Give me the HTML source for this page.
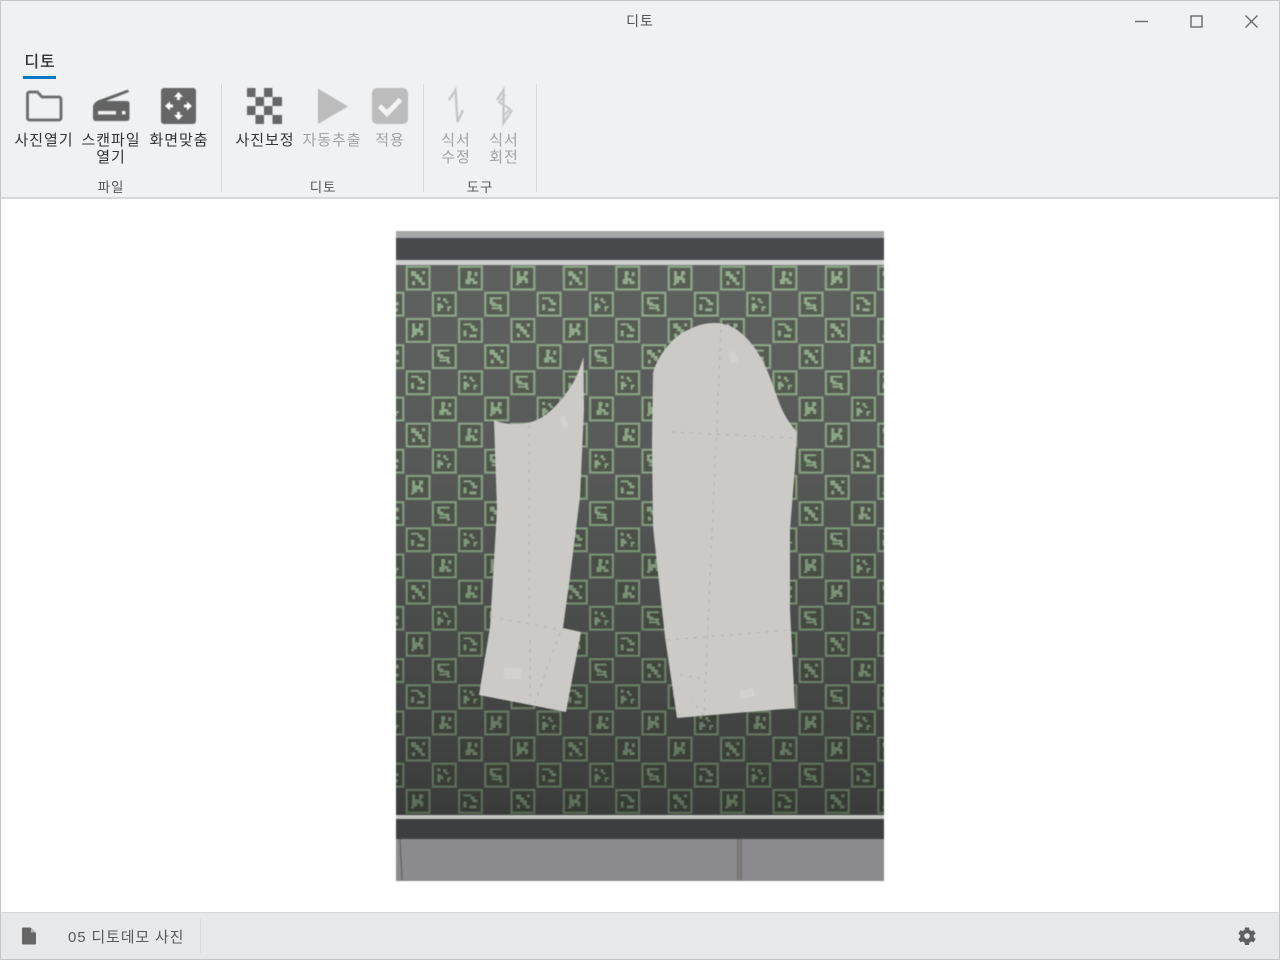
<!DOCTYPE html>
<html lang="ko"><head><meta charset="utf-8"><title>디토</title>
<style>
html,body{margin:0;padding:0;width:1280px;height:960px;overflow:hidden;background:#fff}
body{position:relative;font-family:"Liberation Sans","Noto Sans CJK KR",sans-serif;color:#333}
.t{position:absolute;white-space:nowrap;text-align:center;font-size:15px;line-height:17px;letter-spacing:.95px;filter:blur(.3px)}
.d{color:#a2a2a2}
.g{font-size:13.5px;color:#555;letter-spacing:.8px}
#ribbon{position:absolute;left:0;top:0;width:1280px;height:197px;background:#eff1f3;border-bottom:2px solid #d6d8da;box-sizing:content-box}
#frame{position:absolute;left:0;top:0;width:1278px;height:958px;border:1px solid #c4c7ca;pointer-events:none}
#status{position:absolute;left:0;top:912px;width:1280px;height:48px;background:#e7e8ea;border-top:1px solid #d6d7d9;box-sizing:border-box}
.sep{position:absolute;width:1px;background:#d8dadc}
svg{position:absolute;overflow:visible}
</style></head><body>
<div id="ribbon"></div>
<div class="t" style="left:600px;top:13px;width:80px;color:#555;font-size:14px">디토</div>
<svg style="left:1130px;top:10px" width="140" height="22" fill="none" stroke="#6a6a6a" stroke-width="1.400">
<path d="M5 11.500H18"/><rect x="61" y="6" width="11" height="11"/><path d="M115.500 5.500L127.500 17.500M127.500 5.500L115.500 17.500"/></svg>
<div class="t" style="left:20px;top:54px;width:40px;font-size:16px;color:#333;font-weight:500">디토</div>
<div style="position:absolute;left:23px;top:76px;width:33px;height:3px;background:#0b78c6"></div>

<svg style="left:0;top:80px;filter:blur(.4px)" width="560" height="50">
<path d="M27.500 14a2 2 0 0 1 2-2h8l4.500 5h17a2 2 0 0 1 2 2v19a2 2 0 0 1-2 2h-29.500a2 2 0 0 1-2-2z" fill="none" stroke="#6a6a6a" stroke-width="2.800"/>
<path d="M93 27c0-3 3-5.500 5-6.500l30-11 1 2.500-23 9h21a2.500 2.500 0 0 1 2.500 2.500v15a2.500 2.500 0 0 1-2.500 2.500h-31.500a2.500 2.500 0 0 1-2.500-2.500z" fill="#646464"/>
<rect x="98" y="31" width="18" height="3.500" fill="#eff1f3"/><rect x="122" y="31" width="3.500" height="3.500" fill="#eff1f3"/>
<rect x="161" y="8" width="35" height="36" rx="3" fill="#666"/>
<g fill="#fff"><path d="M178.500 12l4.500 5h-3v3h-3v-3h-3z"/><path d="M178.500 40l4.500-5h-3v-3h-3v3h-3z"/><path d="M165 26l5-4.500v3h3v3h-3v3z"/><path d="M192 26l-5-4.500v3h-3v3h3v3z"/></g>
<g fill="#666"><rect x="247" y="8" width="8.500" height="9"/><rect x="264" y="8" width="8.500" height="9"/><rect x="255.500" y="17" width="8.500" height="9"/><rect x="272.500" y="17" width="9.500" height="9"/><rect x="247" y="26" width="8.500" height="9"/><rect x="264" y="26" width="8.500" height="9"/><rect x="255.500" y="35" width="8.500" height="9"/><rect x="272.500" y="35" width="9.500" height="9"/></g>
<path d="M318 8.500l30 18-30 17.500z" fill="#bcbcbc"/>
<rect x="372" y="8" width="36" height="36" rx="5" fill="#bcbcbc"/>
<path d="M379.500 26l7.500 7.500 13.500-14" fill="none" stroke="#f4f4f4" stroke-width="5"/>
<g fill="none" stroke="#c2c4c6" stroke-width="2.200"><path d="M449 20L455.500 10L457.500 42L463 30"/><path d="M497 20L503.500 10L503.500 43L512 30"/><path d="M505 15l-6 7 11 7-6 6" stroke-width="1.700"/></g>
</svg>

<div class="t" style="left:4px;top:132px;width:80px">사진열기</div>
<div class="t" style="left:71px;top:132px;width:80px">스캔파일<br>열기</div>
<div class="t" style="left:139px;top:132px;width:80px">화면맞춤</div>
<div class="t g" style="left:71px;top:179px;width:80px">파일</div>
<div class="sep" style="left:221px;top:84px;height:108px"></div>
<div class="t" style="left:225px;top:132px;width:80px">사진보정</div>
<div class="t d" style="left:292px;top:132px;width:80px">자동추출</div>
<div class="t d" style="left:350px;top:132px;width:80px">적용</div>
<div class="t g" style="left:283px;top:179px;width:80px">디토</div>
<div class="sep" style="left:423px;top:84px;height:108px"></div>
<div class="t d" style="left:416px;top:132px;width:80px">식서<br>수정</div>
<div class="t d" style="left:464px;top:132px;width:80px">식서<br>회전</div>
<div class="t g" style="left:440px;top:179px;width:80px">도구</div>
<div class="sep" style="left:536px;top:84px;height:108px"></div>

<svg style="left:0;top:0;filter:blur(.6px)" width="1280" height="960" viewBox="0 0 1280 960">
<defs>
<g id="b"><rect x="-11.400" y="-11.400" width="22.800" height="22.800" fill="#53594f" stroke="#8ba686" stroke-width="2.200"/></g>
<g id="m1"><use href="#b"/><path d="M-7-7h5v3h3v3h3v5h3v3h-4v-3h-3v-3h-3v-3h-4zM-6 3h3v4h-3zM4-7h3v3h-3z" fill="#8fab8a"/></g>
<g id="m2"><use href="#b"/><path d="M-6-7h3v5h4v-5h4v4h-2v3h2v5h-3v-3h-3v3h-5zM-7 5h3v2h-3z" fill="#8fab8a"/></g>
<g id="m3"><use href="#b"/><path d="M-7-7h12v2h-9v3h3v2h6v5h-10v-2h7v-1h-7v-2h-2zM3 5h3v2h-3z" fill="#8fab8a"/></g>
<g id="m4"><use href="#b"/><path d="M-3-7h4v4h-1v3h4v3h3v3h-5v-3h-2v3h-5v-5h2zM4-6h3v4h-3z" fill="#8fab8a"/></g>
<g id="m5"><use href="#b"/><path d="M-7-7h3v3h-3zM-1-6h3v3h2v2h-3v-2h-2zM-7-1h4v2h2v3h-3v3h-3zM3 2h4v2h-2v3h-2z" fill="#8fab8a"/></g>
<g id="m6"><use href="#b"/><path d="M-7-7h8v2h3v3h3v3h-5v-3h-2v-3h-7zM-7 0h3v6h-3zM-1 4h7v3h-7z" fill="#8fab8a"/></g>
<pattern id="board" x="405" y="265" width="157.200" height="157" patternUnits="userSpaceOnUse">
<rect width="157.200" height="157" fill="#5a5c5b"/>
<use href="#m1" x="13.100" y="13.100"/><use href="#m4" x="65.500" y="13.100"/><use href="#m2" x="117.900" y="13.100"/>
<use href="#m5" x="39.300" y="39.200"/><use href="#m3" x="91.700" y="39.200"/><use href="#m6" x="144.100" y="39.200"/>
<use href="#m2" x="13.100" y="65.400"/><use href="#m6" x="65.500" y="65.400"/><use href="#m1" x="117.900" y="65.400"/>
<use href="#m3" x="39.300" y="91.600"/><use href="#m1" x="91.700" y="91.600"/><use href="#m4" x="144.100" y="91.600"/>
<use href="#m6" x="13.100" y="117.800"/><use href="#m5" x="65.500" y="117.800"/><use href="#m3" x="117.900" y="117.800"/>
<use href="#m4" x="39.300" y="144"/><use href="#m2" x="91.700" y="144"/><use href="#m5" x="144.100" y="144"/>
</pattern>
<linearGradient id="shade" x1="0" y1="0" x2="0" y2="1"><stop offset="0" stop-color="#fff" stop-opacity=".03"/><stop offset=".4" stop-color="#000" stop-opacity=".05"/><stop offset="1" stop-color="#000" stop-opacity=".36"/></linearGradient>
<clipPath id="c"><rect x="396" y="231" width="488" height="650"/></clipPath>
</defs>
<g clip-path="url(#c)">
<rect x="396" y="231" width="488" height="650" fill="#88888a"/>
<rect x="396" y="231" width="488" height="7" fill="#a6a7a7"/>
<rect x="396" y="238" width="488" height="22" fill="#47494d"/>
<rect x="396" y="260" width="488" height="5" fill="#cfd0cf"/>
<rect x="396" y="265" width="488" height="551" fill="url(#board)"/>
<rect x="396" y="265" width="488" height="551" fill="url(#shade)"/>
<rect x="396" y="815" width="488" height="4" fill="#c4c6c3"/>
<rect x="396" y="819" width="488" height="20" fill="#3d3e40"/>
<rect x="396" y="839" width="488" height="42" fill="#8b8a8d"/>
<path d="M400 839l2 41M738 839v41M741 839v41" stroke="#65625d" stroke-width="1.200" fill="none"/>
<path d="M494 420C500 423 508 424 515 424C528 424 538 421 548 413C558 405 566 394 573 383C578 374 581 365 583.500 357L584 410L580 497L570 577L563 628L581 632L566 712L479 695L490 627L497 510Z" fill="#cbcac7"/>
<path d="M653 373C656 362 661 354 667 347C673 339 680 333 690 329C698 325 705 323 715 323C724 323 733 326 741 333C751 341 760 354 767 370C772 382 776 395 781 407C785 417 791 425 797 432L795 467L790 530L790 610L795 708L677 718L665 637L653 527L652 443Z" fill="#cbcac7"/>
<g fill="none" stroke="#adacaa" stroke-width=".8" stroke-dasharray="3 6">
<path d="M529 425V620M530 640V705M491 617L562 630M560 633L535 702"/>
<path d="M721 330L704 715M672 432L793 438M667 640L790 630M680 675L700 678M703 715L692 700"/>
</g>
<g fill="#d3d2cf"><path d="M560 417l5-2 3 11-5 2z"/><path d="M504 668h17v11h-17z"/><path d="M728 353l6-2 4 10-6 2z"/><path d="M739 691l14-3 2 8-14 3z"/></g>
</g>
</svg>

<div id="status"></div>
<svg style="left:21px;top:927px;filter:blur(.3px)" width="16" height="18"><path d="M1 1.500a1 1 0 0 1 1-1h7.500l5.500 5.500v10.500a1 1 0 0 1-1 1h-12a1 1 0 0 1-1-1z" fill="#666"/><path d="M10 .5v5h5z" fill="#b5b5b5"/></svg>
<div class="t" style="left:68px;top:928.500px;font-size:15px;color:#5a5a5a;letter-spacing:.85px;text-align:left">05 디토데모 사진</div>
<div class="sep" style="left:200px;top:919px;height:34px"></div>
<svg style="left:1238px;top:927px;filter:blur(.3px)" width="18" height="18" viewBox="0 0 18 18"><path d="M7 0.500h4l.5 2.500 1.700 1 2.400-.8 2 3.400-1.900 1.700v1.900l1.900 1.700-2 3.400-2.400-.8-1.700 1-.5 2.500h-4l-.5-2.500-1.700-1-2.400.8-2-3.400 1.900-1.700v-1.900L.4 6.600l2-3.400 2.400.8 1.700-1z" fill="#606060"/><circle cx="9" cy="9" r="2.800" fill="#e7e8ea"/></svg>
<div id="frame"></div>
</body></html>
